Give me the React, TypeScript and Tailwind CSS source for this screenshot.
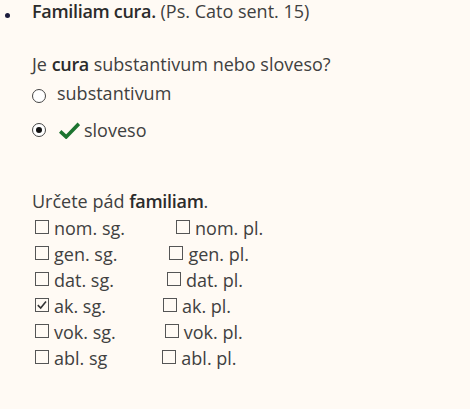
import React from "react";

function Box({ checked }: { checked?: boolean }) {
  return (
    <span className="relative mt-[5px] mr-[5px] box-border inline-block h-[14px] w-[14px] shrink-0 self-start border-[1.5px] border-[#555]">
      {checked && (
        <svg viewBox="0 0 14 14" className="absolute left-[-1.5px] top-[-1.5px] h-[14px] w-[14px]">
          <path d="M2.8 7.2 L5.7 10 L11 3.6" fill="none" stroke="#333" strokeWidth="1.6" />
        </svg>
      )}
    </span>
  );
}

function Radio({ selected, top }: { selected?: boolean; top: string }) {
  return (
    <span
      className={`${top} flex h-[14px] w-[14px] shrink-0 items-center justify-center self-start rounded-full border border-[#444] bg-white`}
    >
      {selected && <span className="h-[6px] w-[6px] rounded-full bg-[#111]" />}
    </span>
  );
}

const rows = [
  { sg: "nom. sg.", pl: "nom. pl.", gap: "ml-[51px]" },
  { sg: "gen. sg.", pl: "gen. pl.", gap: "ml-[52px]" },
  { sg: "dat. sg.", pl: "dat. pl.", gap: "ml-[53px]" },
  { sg: "ak. sg.", pl: "ak. pl.", gap: "ml-[57px]", checked: true },
  { sg: "vok. sg.", pl: "vok. pl.", gap: "ml-[49px]" },
  { sg: "abl. sg", pl: "abl. pl.", gap: "ml-[55px]" },
];

export default function App() {
  return (
    <div
      className="h-[409px] w-[470px] overflow-hidden bg-[#fffaf4] text-[18px] text-[#404040]"
      style={{ fontFamily: '"Open Sans", "Liberation Sans", sans-serif' }}
    >
      <div className="flex">
        <div className="w-[32px] shrink-0">
          <span className="ml-[5px] mt-[13px] block h-[5px] w-[5px] rounded-full bg-[#1c1c3c]" />
        </div>
        <div className="flex flex-col">
          <p className="leading-[22px]">
            <b className="text-[18px] font-semibold tracking-[-0.3px] text-[#2b2b2b]">Familiam cura.</b> (Ps. Cato sent. 15)
          </p>

          <p className="mt-[31px] leading-[22px]">
            Je <b className="text-[18px] font-semibold tracking-[-0.3px] text-[#2b2b2b]">cura</b> substantivum nebo sloveso?
          </p>

          <div className="mt-[7px] flex h-[22px] items-center leading-[22px]">
            <Radio top="mt-[7px]" />
            <span className="ml-[11px]">substantivum</span>
          </div>
          <div className="mt-[15px] flex h-[22px] items-center leading-[22px]">
            <Radio selected top="mt-[4px]" />
            <svg viewBox="0 0 22 17" className="ml-[13px] mt-[3px] h-[17px] w-[21px] shrink-0 self-start">
              <path d="M1.2 9.5 L7.5 15.2 L20.8 1.5" fill="none" stroke="#1d7430" strokeWidth="3.8" strokeLinejoin="miter" />
            </svg>
            <span className="ml-[4px]">sloveso</span>
          </div>

          <p className="mt-[49px] leading-[22px]">
            Určete pád <b className="text-[18px] font-semibold tracking-[-0.3px] text-[#2b2b2b]">familiam</b>.
          </p>

          <div className="mt-[3px] flex flex-col">
            {rows.map((r) => (
              <div key={r.sg} className="ml-[3px] flex h-[26px] items-center leading-[26px]">
                <Box checked={r.checked} />
                <span>{r.sg}</span>
                <span className={`${r.gap} flex h-[26px] items-center`}>
                  <Box />
                  <span>{r.pl}</span>
                </span>
              </div>
            ))}
          </div>
        </div>
      </div>
    </div>
  );
}
